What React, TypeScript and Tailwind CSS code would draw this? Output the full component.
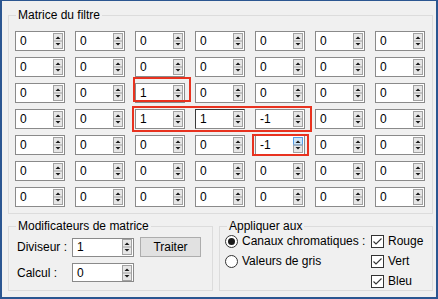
import React from 'react';

const matrix: number[][] = [
  [0, 0, 0, 0, 0, 0, 0],
  [0, 0, 0, 0, 0, 0, 0],
  [0, 0, 1, 0, 0, 0, 0],
  [0, 0, 1, 1, -1, 0, 0],
  [0, 0, 0, 0, -1, 0, 0],
  [0, 0, 0, 0, 0, 0, 0],
  [0, 0, 0, 0, 0, 0, 0]
];

const Spin: React.FC<{ hot?: boolean }> = ({ hot }) => (
  <svg width="10" height="16" viewBox="0 0 10 16" className="shrink-0">
    <rect x="0.5" y="0.5" width="9" height="15" fill="#e6e6e6" stroke="#a2a2a2" />
    {hot && <rect x="0.5" y="0.5" width="9" height="7.5" fill="#cce4f7" stroke="#569de5" />}
    <line x1="0" y1="8" x2="10" y2="8" stroke="#a2a2a2" />
    <path d="M2.5 6 L5 3.5 L7.5 6 Z" fill="#1a1a1a" />
    <path d="M2.5 10 L5 12.5 L7.5 10 Z" fill="#1a1a1a" />
  </svg>
);

const NumBox: React.FC<{ value: number; w?: string; h?: string; focus?: boolean; hot?: boolean }> = ({
  value,
  w = 'w-[50px]',
  h = 'h-[20px]',
  focus,
  hot
}) => (
  <div
    className={`${w} ${h} bg-white border flex items-center pl-[4px] pr-[1px] ${
      focus ? 'border-[#8a8a8a] border-t-[#3a3a3a] border-l-[#3a3a3a]' : 'border-[#8a8a8a]'
    }`}
  >
    <span className="leading-none">{value}</span>
    <span className="ml-auto flex">
      <Spin hot={hot} />
    </span>
  </div>
);

const Radio: React.FC<{ checked?: boolean }> = ({ checked }) => (
  <span className="w-[13px] h-[13px] rounded-full border border-[#333] bg-white flex items-center justify-center shrink-0">
    {checked && <span className="w-[7px] h-[7px] rounded-full bg-[#1a1a1a]" />}
  </span>
);

const Check: React.FC = () => (
  <svg width="13" height="13" viewBox="0 0 13 13" className="shrink-0">
    <rect x="0.5" y="0.5" width="12" height="12" fill="#fff" stroke="#333" />
    <path d="M2.5 6.5 L5 9 L10.5 3.5" fill="none" stroke="#333" strokeWidth="1.1" />
  </svg>
);

export default function App() {
  return (
    <div className="relative w-[438px] h-[299px] font-['Liberation_Sans',Arial,sans-serif] text-[12px] text-black">
      <div className="w-full h-full bg-[#f0f0f0] border-[#2b5691] border-l-2 border-r-2 border-t border-b-2">
        <fieldset className="ml-[6px] mt-[6px] w-[425px] border border-[#dcdcdc]">
          <legend className="ml-[7px] px-[2px] leading-[16px]">Matrice du filtre</legend>
          <div className="pl-[6px] pt-[8px] pb-[6px] grid grid-cols-[repeat(7,50px)] gap-x-[10px] gap-y-[6px]">
            {matrix.map((row, r) =>
              row.map((v, c) => (
                <NumBox key={`${r}-${c}`} value={v} focus={r === 3 && c === 3} hot={r === 4 && c === 4} />
              ))
            )}
          </div>
        </fieldset>

        <div className="flex gap-[6px] ml-[6px] mt-[4px]">
          <fieldset className="w-[205px] h-[73px] border border-[#dcdcdc]">
            <legend className="ml-[7px] px-[2px] leading-[16px]">Modificateurs de matrice</legend>
            <div className="pl-[8px] pt-[3px] flex flex-col gap-[6px]">
              <div className="flex items-center h-[20px]">
                <span className="w-[55px]">Diviseur :</span>
                <NumBox value={1} w="w-[62px]" h="h-[19px]" />
                <button className="ml-[6px] w-[61px] h-[20px] bg-[#e1e1e1] border border-[#adadad] text-[12px] leading-none">
                  Traiter
                </button>
              </div>
              <div className="flex items-center h-[19px]">
                <span className="w-[55px]">Calcul :</span>
                <NumBox value={0} w="w-[62px]" h="h-[19px]" />
              </div>
            </div>
          </fieldset>

          <fieldset className="w-[214px] h-[73px] border border-[#dcdcdc]">
            <legend className="ml-[7px] px-[2px] leading-[16px]">Appliquer aux</legend>
            <div className="pl-[5px] -mt-[3px] grid grid-cols-[146px_1fr] auto-rows-[20px]">
              <div className="flex items-center">
                <Radio checked />
                <span className="ml-[4px]">Canaux chromatiques :</span>
              </div>
              <div className="flex items-center">
                <Check />
                <span className="ml-[4px]">Rouge</span>
              </div>
              <div className="flex items-center">
                <Radio />
                <span className="ml-[4px]">Valeurs de gris</span>
              </div>
              <div className="flex items-center">
                <Check />
                <span className="ml-[4px]">Vert</span>
              </div>
              <div />
              <div className="flex items-center">
                <Check />
                <span className="ml-[4px]">Bleu</span>
              </div>
            </div>
          </fieldset>
        </div>
      </div>

      <div className="absolute left-[133px] top-[77px] w-[58px] h-[25px] border-2 border-[#e8321f]" />
      <div className="absolute left-[132px] top-[106px] w-[180px] h-[26px] border-2 border-[#e8321f]" />
      <div className="absolute left-[252px] top-[134px] w-[57px] h-[22px] border-2 border-[#e8321f]" />
    </div>
  );
}
